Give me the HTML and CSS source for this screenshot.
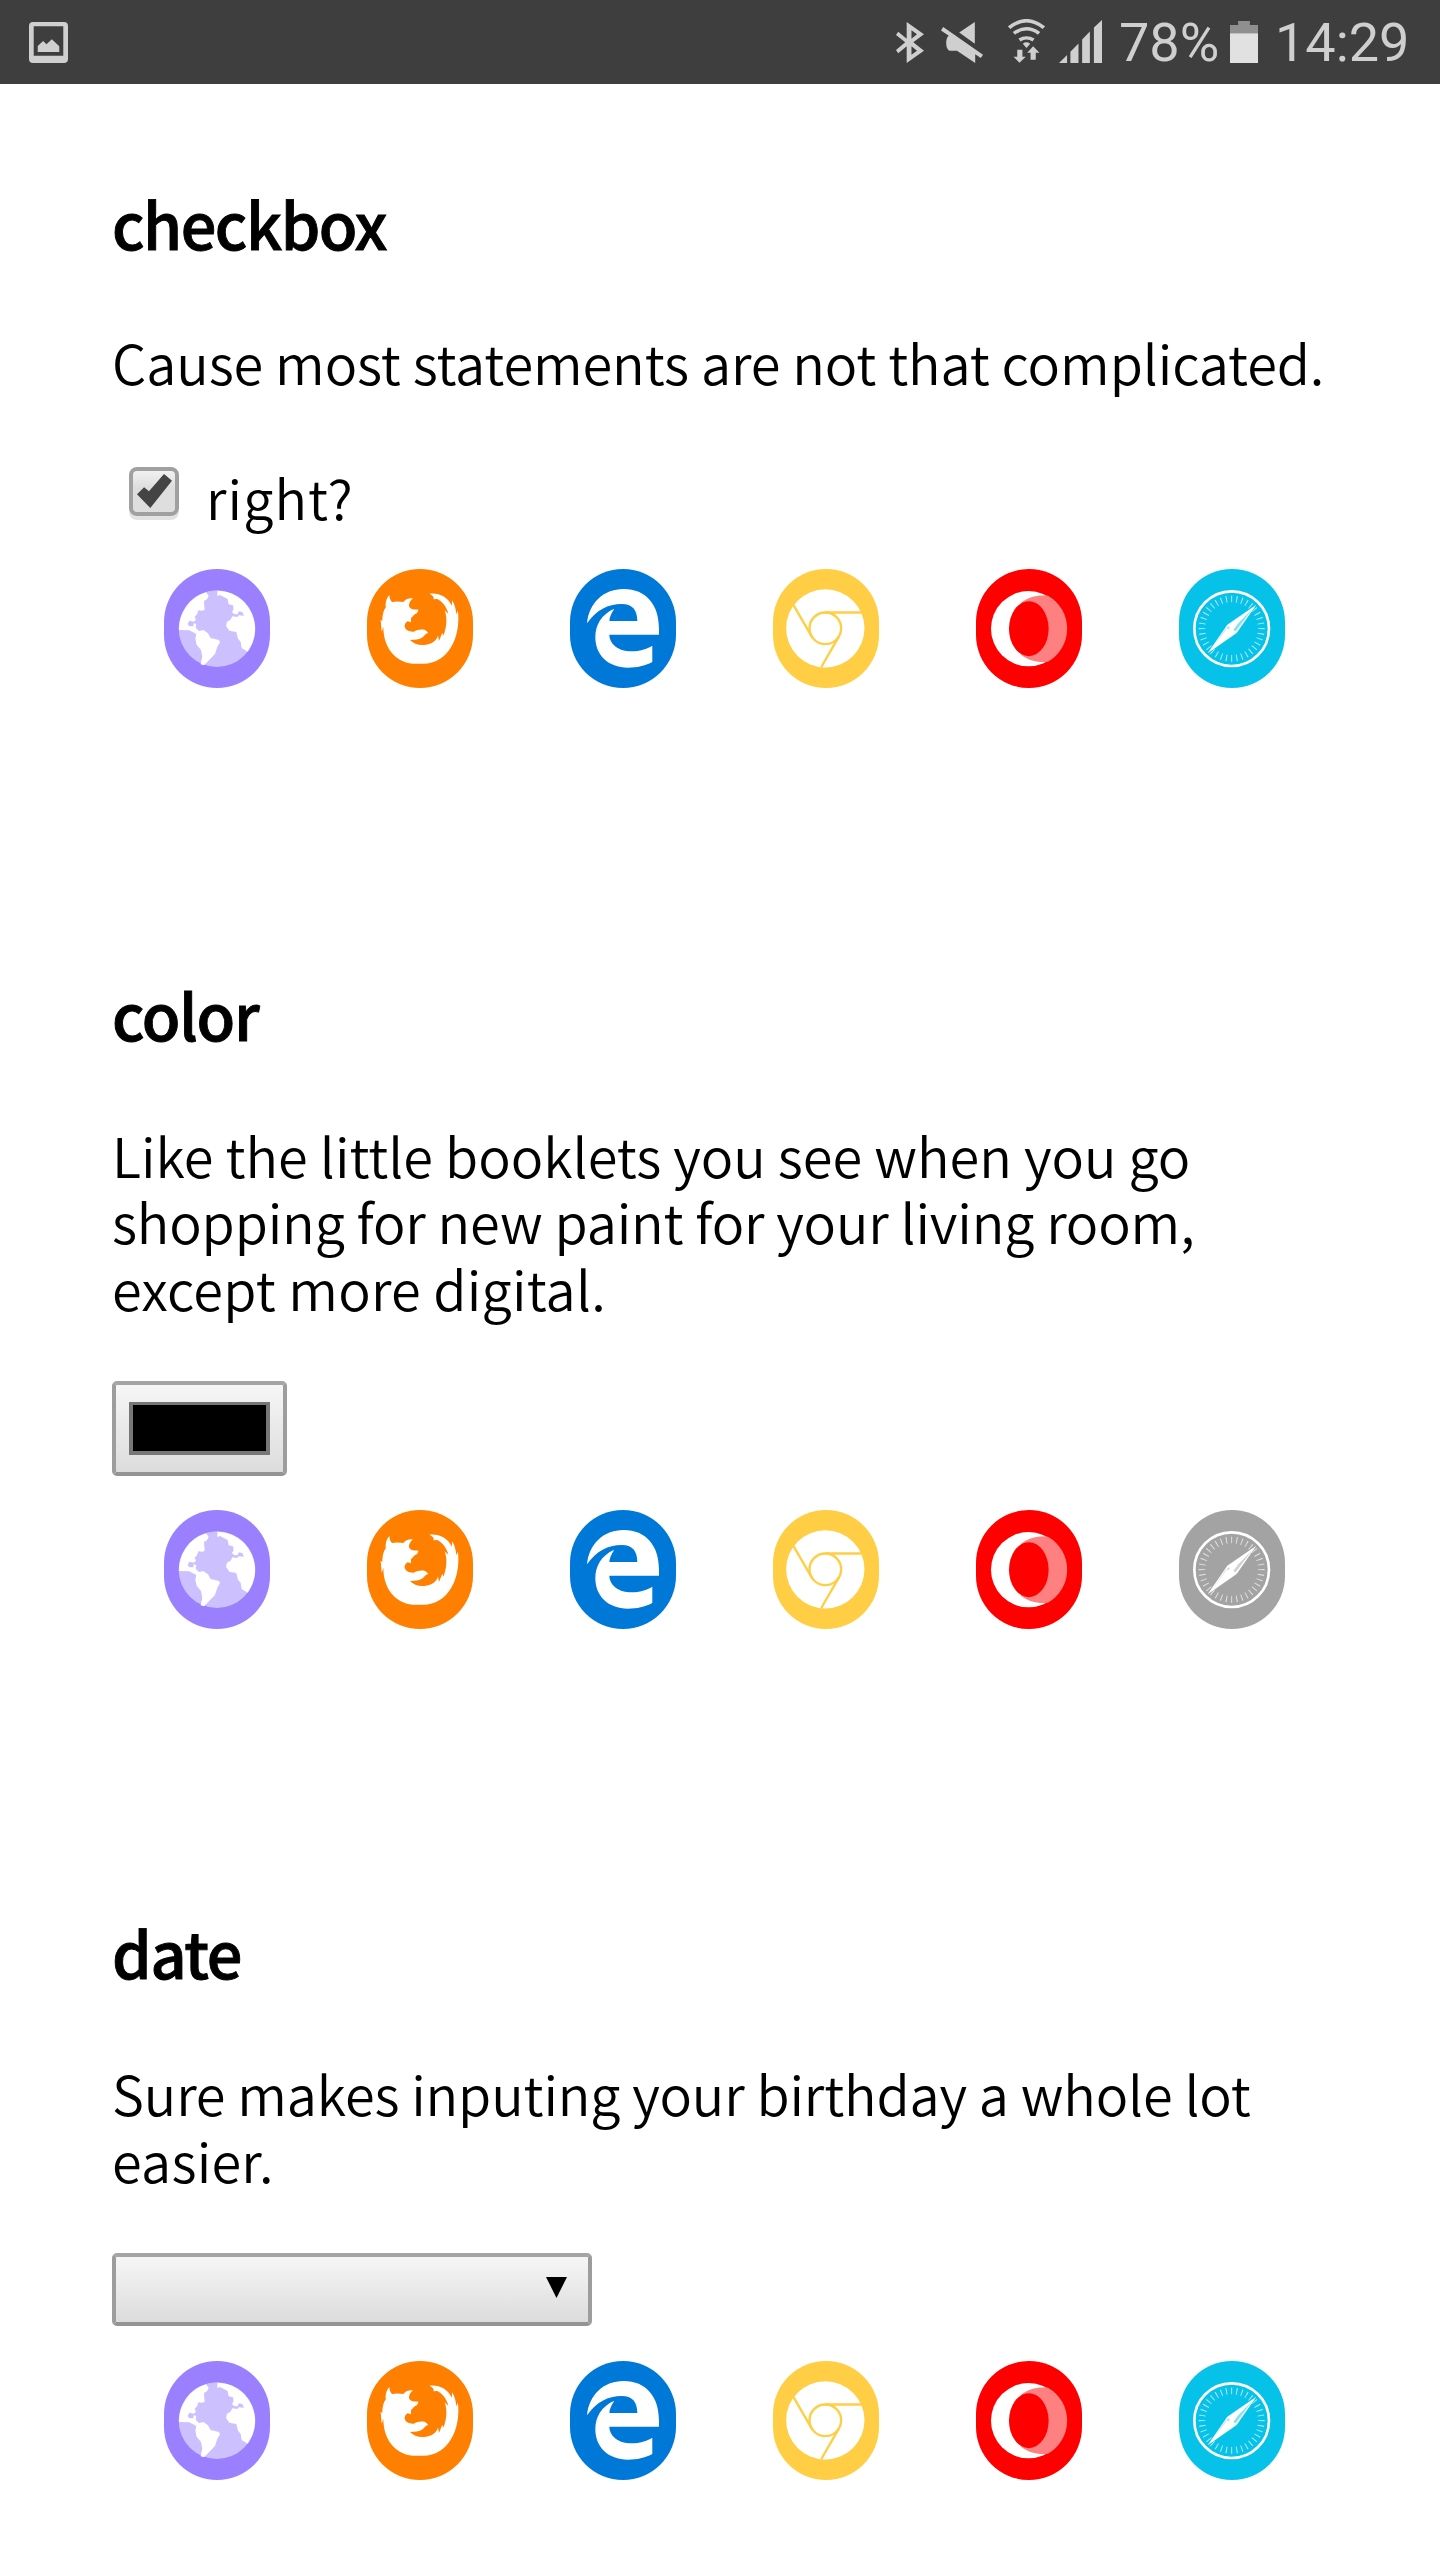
FILE: index.html
```html
<!DOCTYPE html>
<html lang="en">
<head>
<meta charset="utf-8">
<title>Input types</title>
<link rel="stylesheet" href="styles.css">
</head>
<body>
<svg class="sprite" aria-hidden="true">
  <symbol id="globe" viewBox="42 27 316 357">
    <circle cx="201" cy="206" r="115" fill="#fff" opacity=".5"/>
    <path fill="#fff" d="M87 210A115 115 0 0 1 168 97L176 107L171 118L162 123L164 149L157 152L145 151L141 163L134 170L138 179L132 185L118 182L113 192L118 199L130 199L131 190L139 192L137 203L147 213L160 210L174 220L182 234L207 240L210 247L202 260L195 282L162 316L152 313L157 290L153 270L140 254L136 236L139 222L118 211Z"/>
    <path fill="#fff" d="M202 92V108L210 105L233 117L236 133L249 136L251 148L246 156L253 163L264 162L266 154L277 156L282 167L266 166L262 171L247 169L242 179L231 185L228 197L238 212L259 216L264 236L272 245L275 264L293 275A115 115 0 0 0 202 92Z"/>
  </symbol>
  <symbol id="firefox" viewBox="653 27 316 357">
    <path fill="#fff" d="M720 105C721 116 724 122 728 126C740 123 752 124 762 126C768 119 776 114 791 115C783 122 777 132 780 141C785 149 795 148 807 149C807 156 802 161 796 163L785 175V187L775 184C765 190 764 201 769 206C775 214 785 214 793 215C803 209 815 207 825 209C832 211 836 217 836 219C828 221 826 226 820 232C810 239 797 240 782 240C792 250 808 257 825 255C850 252 864 240 866 226L869 243L879 218L882 227C893 202 894 172 886 151L897 161C892 140 878 124 864 117L852 118C856 114 852 107 840 101C865 97 895 108 907 137L909 121C918 138 920 152 921 163L926 152C935 235 895 311 822 311H790C735 305 702 260 702 200L697 215L694 179L699 184C699 168 702 150 709 143C708 127 711 114 720 105Z"/>
  </symbol>
  <symbol id="edge" viewBox="31 27 316 357">
    <path fill="#fff" d="M82 190C88 130 130 87 192 87C260 87 298 135 298 205V224H149C150 255 180 274 215 274C240 274 262 267 278 257V306C255 318 232 323 205 323C145 323 107 285 107 232C107 195 125 163 164 146C155 160 150 170 149 183H233C233 150 218 132 186 132C145 132 110 150 82 190Z"/>
  </symbol>
  <symbol id="chrome" viewBox="641 27 316 357">
    <circle cx="798" cy="205" r="117.5" fill="#fff"/>
    <g fill="none" stroke="#ffce44" stroke-width="7">
      <circle cx="798" cy="205" r="47.5"/>
      <path d="M798 157.5H910M757 229L703 136M839 229L786 321"/>
    </g>
  </symbol>
  <symbol id="opera" viewBox="49 27 316 357">
    <circle cx="207" cy="206" r="113" fill="#fff"/>
    <path fill="#ff8080" d="M265 107C235 104 208 109 184 128V284C208 303 235 308 265 305A114 114 0 0 0 265 107Z"/>
    <ellipse cx="207.500" cy="206" rx="59.500" ry="82.500" fill="#f00"/>
  </symbol>
  <symbol id="safari" viewBox="658 27 316 357">
    <circle cx="816" cy="206" r="112" fill="none" stroke="#fff" stroke-width="8"/>
    <circle cx="816" cy="206" r="89" fill="none" stroke="#fff" stroke-width="20" opacity=".65" pathLength="360" stroke-dasharray="2 8" stroke-dashoffset="1"/>
    <path fill="#fff" d="M890 134L831 219L744 280L803 194Z"/>
    <path fill="currentColor" opacity=".5" d="M821 210L836 190L878 147L828 214ZM811 205L798 207L757 267L806 199Z"/>
  </symbol>
</svg>

<header class="status">
  <svg class="status-picture" viewBox="88 66 116 123" preserveAspectRatio="none"><path fill="#cfcfcf" fill-rule="evenodd" d="M100 66H192Q204 66 204 78V177Q204 189 192 189H100Q88 189 88 177V78Q88 66 100 66ZM102 79V167H190V79ZM114 156V138L130 123L140 133L156 118L178 139V156Z"/></svg>
  <svg class="status-bluetooth" viewBox="98 65 76 125" preserveAspectRatio="none"><path fill="#cfcfcf" fill-rule="evenodd" d="M127 65L174 102L145 127L174 153L127 190V139L104 160L98 150L123 127L98 105L104 95L127 116ZM140 90V116L155 102ZM140 139V165L155 153Z"/></svg>
  <svg class="status-mute" viewBox="220 65 113 125" preserveAspectRatio="none"><path fill="#cfcfcf" d="M226 80L333 165L327 175L312 163V190L263 153H243Q234 148 234 130Q234 112 241 107L220 91ZM311 65V131L269 97Z"/></svg>
  <svg class="status-wifi" viewBox="400 58 100 132" preserveAspectRatio="none"><path fill="none" stroke="#cfcfcf" stroke-width="10" d="M403 84Q450 42 497 84M416 101Q450 74 484 101M431 121Q450 108 469 121"/><path fill="#cfcfcf" d="M440 132Q450 124 460 132L450 145ZM425 150H439V171H448L431 189L415 171H425ZM468 140L485 159H475V180H461V159H452Z"/></svg>
  <svg class="status-signal" viewBox="538 59 117 130" preserveAspectRatio="none"><path fill="#cfcfcf" d="M538 189L560 165V189ZM569 189V155L591 130V189ZM601 189V118L622 94V189ZM633 189V82L655 59V189Z"/></svg>
  <span class="status-percent">78%</span>
  <svg class="status-battery" viewBox="1000 63 76 126" preserveAspectRatio="none"><path fill="#8f8f8f" d="M1022 63H1054V75H1076V101H1000V75H1022Z"/><path fill="#e1e1e1" d="M1000 100H1076V189H1000Z"/></svg>
  <span class="status-time">14:29</span>
</header>

<main>
  <section class="entry entry-checkbox">
    <h2>checkbox</h2>
    <p><span class="snug">Cause most statements are not that complicated.</span></p>
    <label class="check">
      <span class="check-box"><svg viewBox="82 465 79 102" preserveAspectRatio="none"><path fill="#444" d="M82 526L98 505L109 517L143 465L161 485L112 567Z"/></svg></span>
      <span>right?</span>
    </label>
    <div class="browsers">
      <svg class="badge globe"><use href="#globe"/></svg>
      <svg class="badge firefox"><use href="#firefox"/></svg>
      <svg class="badge edge"><use href="#edge"/></svg>
      <svg class="badge chrome"><use href="#chrome"/></svg>
      <svg class="badge opera"><use href="#opera"/></svg>
      <svg class="badge safari"><use href="#safari"/></svg>
    </div>
  </section>

  <section class="entry entry-color">
    <h2>color</h2>
    <p>Like the little booklets you see when you go<br><span class="tight">shopping for new paint for your living room,</span><br><span class="loose">except more digital.</span></p>
    <div class="control color-input"><span class="swatch"></span></div>
    <div class="browsers">
      <svg class="badge globe"><use href="#globe"/></svg>
      <svg class="badge firefox"><use href="#firefox"/></svg>
      <svg class="badge edge"><use href="#edge"/></svg>
      <svg class="badge chrome"><use href="#chrome"/></svg>
      <svg class="badge opera"><use href="#opera"/></svg>
      <svg class="badge unsupported"><use href="#safari"/></svg>
    </div>
  </section>

  <section class="entry entry-date">
    <h2>date</h2>
    <p><span class="tight">Sure makes inputing your birthday a whole lot</span><br><span class="loose">easier.</span></p>
    <div class="control date-input"><svg class="arrow" viewBox="0 0 21 21"><path d="M0 0H21L10.500 21Z"/></svg></div>
    <div class="browsers">
      <svg class="badge globe"><use href="#globe"/></svg>
      <svg class="badge firefox"><use href="#firefox"/></svg>
      <svg class="badge edge"><use href="#edge"/></svg>
      <svg class="badge chrome"><use href="#chrome"/></svg>
      <svg class="badge opera"><use href="#opera"/></svg>
      <svg class="badge safari"><use href="#safari"/></svg>
    </div>
  </section>
</main>
</body>
</html>
```
FILE: styles.css
```css
* { box-sizing: border-box; }

body {
  margin: 0;
  height: 2560px;
  overflow: hidden;
  background: #fff;
  color: #000;
  font-family: "Noto Sans CJK SC", "Noto Sans", sans-serif;
}

.sprite { display: none; }
svg { display: block; flex: none; }

/* Status bar */
.status {
  display: flex;
  align-items: flex-start;
  height: 84px;
  padding: 0 32px 0 29px;
  background: #3e3e3e;
  color: #cfcfcf;
  font: 400 54px/84px Roboto, sans-serif;
}
.status-picture { width: 39px; height: 41px; margin: 22px auto 0 0; }
.status-bluetooth { width: 28px; height: 41px; margin: 22px 17px 0 0; }
.status-mute { width: 42px; height: 41px; margin: 22px 25px 0 0; }
.status-wifi { width: 37px; height: 44px; margin: 19px 14px 0 0; }
.status-signal { width: 43px; height: 43px; margin: 20px 17px 0 0; }
.status-percent { width: 101px; margin-right: 10px; padding-top: 1px; }
.status-battery { width: 28px; height: 42px; margin: 21px 17px 0 0; }
.status-time { width: 133px; padding-top: 1px; white-space: nowrap; }

/* Entries */
.entry { padding: 0 112px; }
.entry-checkbox { padding-top: 99px; }
.entry-color { padding-top: 286px; }
.entry-date { padding-top: 283px; }

h2 {
  margin: 0 0 67px;
  font-size: 63px;
  font-weight: 500;
  line-height: 80px;
  letter-spacing: -1.300px;
  -webkit-text-stroke: 0.900px #000;
}
.entry-checkbox h2 { margin-bottom: 65px; letter-spacing: -1.500px; }

p {
  margin: 0 0 59px;
  padding-top: 1px;
  font-size: 54px;
  font-weight: 350;
  line-height: 66.700px;
  letter-spacing: 0.020px;
  white-space: nowrap;
}
.snug { letter-spacing: -0.080px; }
.tight { letter-spacing: -0.140px; }
.loose { letter-spacing: 0.250px; }

.check {
  display: flex;
  align-items: flex-start;
  gap: 27px;
  height: 67px;
  margin: 67px 0 39px 17px;
  font-size: 54px;
  font-weight: 350;
  line-height: 67px;
  letter-spacing: 1.100px;
}
.entry-checkbox p { margin-bottom: 0; }
.check-box {
  display: flex;
  align-items: center;
  justify-content: center;
  width: 50px;
  height: 49px;
  margin-top: 4px;
  border: 4px solid #a0a0a0;
  border-radius: 8px;
  background: linear-gradient(#f1f1f1, #dedede 40%, #dedede);
  box-shadow: 0 4px 0 #e2e2e2;
}
.check-box svg { width: 35px; height: 34px; }

.control {
  display: flex;
  align-items: center;
  border: 4px solid;
  border-color: #a5a5a5 #9d9d9d #949494;
  border-radius: 5px;
  background: linear-gradient(#f6f6f6, #dcdcdc);
}
.color-input {
  justify-content: center;
  width: 175px;
  height: 95px;
  margin-bottom: 34px;
}
.swatch {
  width: 141px;
  height: 53px;
  border: 4px solid #777;
  border-top-width: 3px;
  background: #000;
}
.date-input {
  justify-content: flex-end;
  width: 480px;
  height: 73px;
  margin: 60px 0 35px;
  padding: 0 21px 4px 0;
}
.arrow { width: 21px; height: 21px; }

/* Browser support badges */
.browsers {
  display: flex;
  gap: 97.700px;
  padding-left: 52.300px;
}
.badge { width: 105.300px; height: 119px; border-radius: 53px; }
.globe { background: #9a80ff; }
.firefox { background: #ff8000; }
.edge { background: #0078d7; }
.chrome { background: #ffce44; }
.opera { background: #f00; }
.safari { background: #06c2e8; color: #06c2e8; }
.unsupported { background: #a3a3a3; color: #a3a3a3; }
```
